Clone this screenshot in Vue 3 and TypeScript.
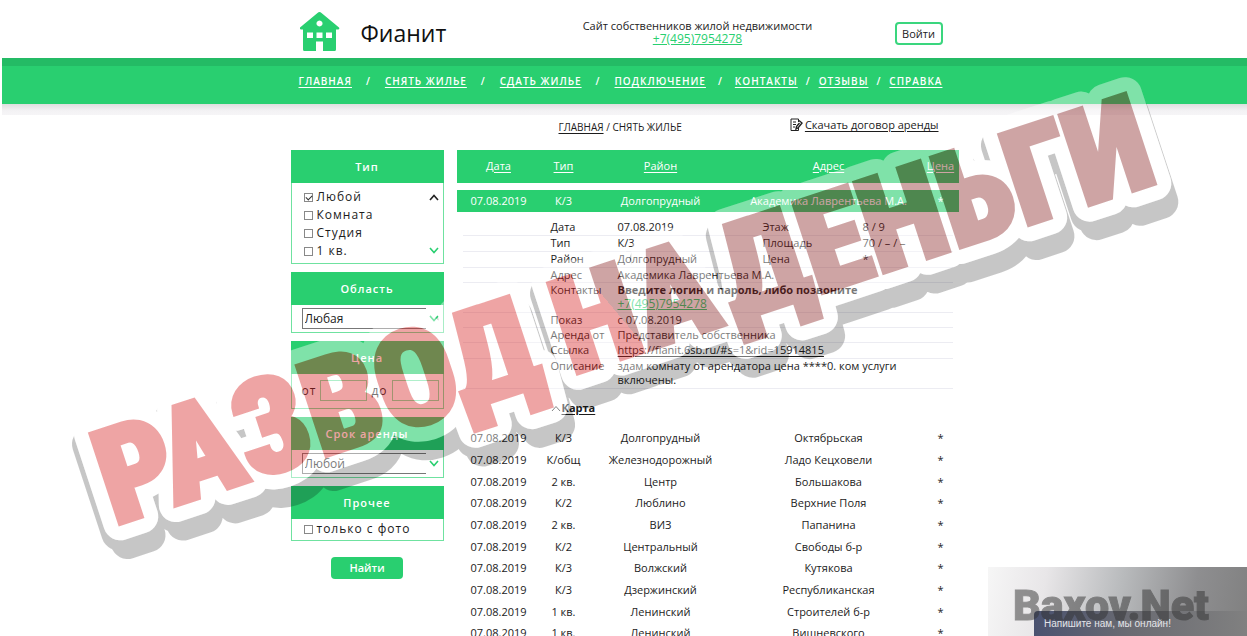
<script setup lang="ts">
import { ref } from 'vue'

interface Listing {
  date: string
  type: string
  district: string
  address: string
}

const nav: { label: string; gap: string }[] = [
  { label: 'ГЛАВНАЯ', gap: '' },
  { label: 'СНЯТЬ ЖИЛЬЕ', gap: 'wide' },
  { label: 'СДАТЬ ЖИЛЬЕ', gap: 'wide' },
  { label: 'ПОДКЛЮЧЕНИЕ', gap: 'wide' },
  { label: 'КОНТАКТЫ', gap: 'medium' },
  { label: 'ОТЗЫВЫ', gap: 'narrow' },
  { label: 'СПРАВКА', gap: 'narrow' },
]

const columns = ['Дата', 'Тип', 'Район', 'Адрес', 'Цена']

const kinds = ref([
  { label: 'Любой', on: true },
  { label: 'Комната', on: false },
  { label: 'Студия', on: false },
  { label: '1 кв.', on: false },
])
const photoOnly = ref(false)

const date = '07.08.2019'
const listings: Listing[] = [
  { date, type: 'К/3', district: 'Долгопрудный', address: 'Октябрьская' },
  { date, type: 'К/общ', district: 'Железнодорожный', address: 'Ладо Кецховели' },
  { date, type: '2 кв.', district: 'Центр', address: 'Большакова' },
  { date, type: 'К/2', district: 'Люблино', address: 'Верхние Поля' },
  { date, type: '2 кв.', district: 'ВИЗ', address: 'Папанина' },
  { date, type: 'К/2', district: 'Центральный', address: 'Свободы б-р' },
  { date, type: 'К/3', district: 'Волжский', address: 'Кутякова' },
  { date, type: 'К/3', district: 'Дзержинский', address: 'Республиканская' },
  { date, type: '1 кв.', district: 'Ленинский', address: 'Строителей б-р' },
  { date, type: '1 кв.', district: 'Ленинский', address: 'Вишневского' },
]

const stampWords = [
  { text: 'РАЗВОД', x: -4 },
  { text: 'НА', x: 478 },
  { text: 'ДЕНЬГИ', x: 650 },
]
</script>

<template>
  <div class="page">
    <header class="wrap head">
      <a class="logo" href="#">
        <svg width="40" height="40" viewBox="0 0 40 40" aria-hidden="true">
          <path
            fill="#29cf70"
            fill-rule="evenodd"
            d="M19.500 0 Q20.500 0 21.500 1 L39 15.500 Q40 17 38 17.500 H36 V37.500 Q36 39 34.500 39 H23 V29.500 H16 V39 H4.500 Q3 39 3 37.500 V17.500 H1 Q-1 17 0 15.500 L17.500 1 Q18.500 0 19.500 0 Z M19.500 8.500 a3 3 0 1 0 .01 0 Z M7 20.500 V26 H13 V20.500 Z M16.500 20.500 V26 H22.500 V20.500 Z M26 20.500 V26 H32 V20.500 Z"
          />
        </svg>
        <span>Фианит</span>
      </a>
      <div class="tagline">
        <span>Сайт собственников жилой недвижимости</span>
        <a class="phone" href="tel:+74957954278">+7(495)7954278</a>
      </div>
      <button class="login" type="button">Войти</button>
    </header>

    <nav class="bar">
      <div class="wrap links">
        <template v-for="item in nav" :key="item.label">
          <span v-if="item.gap" :class="item.gap">/</span>
          <a href="#">{{ item.label }}</a>
        </template>
      </div>
    </nav>
    <div class="shade"></div>

    <div class="wrap crumbs">
      <div class="path"><a href="#">ГЛАВНАЯ</a> / СНЯТЬ ЖИЛЬЕ</div>
      <a class="contract" href="#">
        <svg width="13" height="14" viewBox="0 0 13 14" fill="none" stroke="#222" aria-hidden="true">
          <path d="M8.500 1 H1 V12.500 H8.500 V10 M8.500 1 V4 M3 4 H6 M3 6.500 H6 M3 9 H5" />
          <path d="M9 2.500 L12 5 L8 10 L6 11 L6.500 8.500 L9.500 5" stroke-width="1.400" />
        </svg>
        <span>Скачать договор аренды</span>
      </a>
    </div>

    <div class="wrap content">
      <form class="side" @submit.prevent>
        <section class="panel">
          <h2>Тип</h2>
          <div class="kinds">
            <div class="options">
              <label v-for="kind in kinds" :key="kind.label" class="check">
                <input v-model="kind.on" type="checkbox" />{{ kind.label }}
              </label>
            </div>
            <div class="arrows">
              <svg width="10" height="7" viewBox="0 0 10 7" aria-hidden="true"><path d="M1 6 L5 1.500 L9 6" fill="none" stroke="#222" stroke-width="1.600" /></svg>
              <svg width="10" height="7" viewBox="0 0 10 7" aria-hidden="true"><path d="M1 1 L5 5.500 L9 1" fill="none" stroke="#29cf70" stroke-width="1.600" /></svg>
            </div>
          </div>
        </section>

        <section class="panel">
          <h2 id="area-title">Область</h2>
          <div class="pick">
            <select aria-labelledby="area-title"><option>Любая</option></select>
            <svg width="10" height="7" viewBox="0 0 10 7" aria-hidden="true"><path d="M1 1 L5 5.500 L9 1" fill="none" stroke="#29cf70" stroke-width="1.600" /></svg>
          </div>
        </section>

        <section class="panel">
          <h2>Цена</h2>
          <div class="price">
            <label for="price-from">от</label><input id="price-from" type="text" />
            <label for="price-to">до</label><input id="price-to" type="text" />
          </div>
        </section>

        <section class="panel">
          <h2 id="term-title">Срок аренды</h2>
          <div class="pick">
            <select aria-labelledby="term-title"><option>Любой</option></select>
            <svg width="10" height="7" viewBox="0 0 10 7" aria-hidden="true"><path d="M1 1 L5 5.500 L9 1" fill="none" stroke="#29cf70" stroke-width="1.600" /></svg>
          </div>
        </section>

        <section class="panel">
          <h2>Прочее</h2>
          <div class="other">
            <label class="check"><input v-model="photoOnly" type="checkbox" />только с фото</label>
          </div>
        </section>

        <button class="find" type="submit">Найти</button>
      </form>

      <main>
        <table class="list">
          <colgroup>
            <col class="c-date" /><col class="c-type" /><col class="c-district" /><col class="c-address" /><col />
          </colgroup>
          <thead>
            <tr>
              <th v-for="name in columns" :key="name"><a href="#">{{ name }}</a></th>
            </tr>
          </thead>
          <tbody>
            <tr class="active">
              <td>07.08.2019</td><td>К/3</td><td>Долгопрудный</td><td>Академика Лаврентьева М.А.</td><td>*</td>
            </tr>
            <tr>
              <td colspan="5" class="details">
                <dl>
                  <div><dt>Дата</dt><dd>07.08.2019</dd><dt>Этаж</dt><dd>8 / 9</dd></div>
                  <div><dt>Тип</dt><dd>К/3</dd><dt>Площадь</dt><dd>70 / – / –</dd></div>
                  <div><dt>Район</dt><dd>Долгопрудный</dd><dt>Цена</dt><dd>*</dd></div>
                  <div class="tight"><dt>Адрес</dt><dd class="long">Академика Лаврентьева М.А.</dd></div>
                  <div>
                    <dt>Контакты</dt>
                    <dd class="long">
                      <b>Введите логин и пароль, либо позвоните</b><br />
                      <a class="phone" href="tel:+74957954278">+7(495)7954278</a>
                    </dd>
                  </div>
                  <div class="tight"><dt>Показ</dt><dd class="long">с 07.08.2019</dd></div>
                  <div class="tight"><dt>Аренда от</dt><dd class="long">Представитель собственника</dd></div>
                  <div><dt>Ссылка</dt><dd class="long"><a href="#">https://fianit.6sb.ru/#s=1&amp;rid=15914815</a></dd></div>
                  <div><dt>Описание</dt><dd class="long">здам комнату от арендатора цена ****0. ком услуги включены.</dd></div>
                </dl>
                <div class="map">
                  <svg width="10" height="7" viewBox="0 0 10 7" aria-hidden="true"><path d="M1 6 L5 1.500 L9 6" fill="none" stroke="#333" /></svg>
                  <a href="#">Карта</a>
                </div>
              </td>
            </tr>
          </tbody>
          <tbody class="rows">
            <tr v-for="(row, i) in listings" :key="i">
              <td>{{ row.date }}</td><td>{{ row.type }}</td><td>{{ row.district }}</td><td>{{ row.address }}</td><td>*</td>
            </tr>
          </tbody>
        </table>
      </main>
    </div>

    <svg class="stamp" viewBox="0 0 1247 636" aria-hidden="true">
      <defs>
        <linearGradient id="ink" gradientUnits="userSpaceOnUse" x1="457" y1="-41" x2="603" y2="-99">
          <stop offset="0.500" stop-color="#d71e1e" />
          <stop offset="0.500" stop-color="#871e1e" />
        </linearGradient>
        <mask id="outside" maskUnits="userSpaceOnUse" x="-100" y="-200" width="1400" height="400">
          <rect x="-100" y="-200" width="1400" height="400" fill="#fff" />
          <text class="edge cut"><tspan v-for="w in stampWords" :key="w.text" :x="w.x" y="0">{{ w.text }}</tspan></text>
        </mask>
      </defs>
      <g transform="translate(118 524) rotate(-18.200)">
        <g mask="url(#outside)" opacity="0.220">
          <text class="edge drop" transform="translate(-5 9)"><tspan v-for="w in stampWords" :key="w.text" :x="w.x" y="0">{{ w.text }}</tspan></text>
          <text class="edge drop" transform="translate(1 20)"><tspan v-for="w in stampWords" :key="w.text" :x="w.x" y="0">{{ w.text }}</tspan></text>
        </g>
        <g opacity="0.400">
          <text class="edge"><tspan v-for="w in stampWords" :key="w.text" :x="w.x" y="0">{{ w.text }}</tspan></text>
          <text class="face"><tspan v-for="w in stampWords" :key="w.text" :x="w.x" y="0">{{ w.text }}</tspan></text>
        </g>
      </g>
    </svg>

    <aside class="corner">
      <button class="chat" type="button">Напишите нам, мы онлайн!</button>
      <span class="brand">Baxov.Net</span>
    </aside>
  </div>
</template>

<style>
body {
  margin: 0;
  background: #fff;
}
</style>

<style scoped>
.page {
  position: relative;
  height: 100vh;
  overflow: hidden;
  padding-left: 2px;
  color: #1c1c1c;
  font: 11px/14px 'Open Sans', 'Noto Sans', sans-serif;
}
.page * {
  box-sizing: border-box;
}
a {
  color: inherit;
  text-underline-offset: 2px;
}
button,
input,
select {
  font: inherit;
  color: inherit;
}
.wrap {
  max-width: 668px;
  margin: 0 auto;
}
.head {
  display: grid;
  grid-template-columns: 290px 234px 1fr;
  height: 58px;
  padding-right: 16px;
}
.logo {
  display: flex;
  gap: 21px;
  padding: 12px 0 0 9px;
  color: #111;
  font-size: 23px;
  line-height: 42px;
  text-decoration: none;
}
.tagline {
  display: flex;
  flex-direction: column;
  align-items: center;
  padding-top: 19px;
  line-height: 13px;
  white-space: nowrap;
}
.phone {
  color: #29cf70;
  font-size: 12px;
  text-underline-offset: 1px;
}
.login {
  justify-self: end;
  width: 48px;
  height: 23px;
  margin-top: 22px;
  padding: 0;
  border: 2px solid #3ad67e;
  border-radius: 4px;
  background: #fff;
}
.bar {
  height: 46px;
  border-top: 8px solid #24bb65;
  background: #29cf70;
  color: #fff;
}
.links {
  display: flex;
  padding: 8px 0 0 8px;
  font-size: 10px;
  font-weight: 600;
  letter-spacing: 1px;
  white-space: nowrap;
}
.wide {
  padding: 0 14px;
}
.medium {
  padding: 0 12px;
}
.narrow {
  padding: 0 8px;
}
.shade {
  height: 11px;
  background: linear-gradient(#dedede, #f3f2f4 60%, #f6f5f7);
}
.crumbs {
  display: flex;
  justify-content: space-between;
  height: 35px;
  padding: 3px 20px 0 268px;
}
.path {
  padding-top: 2px;
  font-size: 10px;
}
.contract {
  display: flex;
  gap: 2px;
  height: 16px;
}
.content {
  display: grid;
  grid-template-columns: 153px 1fr;
  gap: 13px;
  align-items: start;
}
.side {
  display: flex;
  flex-direction: column;
  gap: 8px;
  font-size: 12px;
  letter-spacing: 1px;
}
.panel {
  border: 1px solid #6fe2a0;
  border-top: 0;
}
.panel h2 {
  margin: 0 -1px;
  background: #29cf70;
  color: #fff;
  font-size: 11px;
  font-weight: 600;
  line-height: 33px;
  text-align: center;
}
.kinds {
  display: flex;
  justify-content: space-between;
  padding: 5px 4px 3px 12px;
}
.options {
  display: flex;
  flex-direction: column;
}
.check {
  display: flex;
  align-items: center;
  gap: 4px;
  line-height: 18px;
}
.check input {
  appearance: none;
  width: 9px;
  height: 9px;
  margin: 0;
  border: 1px solid #888;
  background: #fff;
}
.check input:checked::before {
  content: '';
  display: block;
  width: 5px;
  height: 3px;
  margin: 1px;
  border: solid #333;
  border-width: 0 0 1px 1px;
  transform: rotate(-45deg);
}
.arrows {
  display: flex;
  flex-direction: column;
  justify-content: space-between;
  padding: 6px 0;
}
.pick {
  display: flex;
  align-items: center;
  justify-content: space-between;
  padding: 3px 4px 3px 10px;
}
.pick select {
  appearance: none;
  width: 124px;
  height: 21px;
  padding: 0 2px;
  border: 1px solid #777;
  border-right: 0;
  border-radius: 0;
  background: #fff;
  letter-spacing: 0;
}
.price {
  display: flex;
  align-items: center;
  justify-content: space-between;
  padding: 6px 4px 7px 10px;
}
.price input {
  width: 47px;
  height: 21px;
  border: 1px solid #7be5a8;
  background: #fff;
}
.other {
  padding: 1px 0 2px 12px;
}
.find {
  align-self: center;
  width: 72px;
  height: 22px;
  margin-top: 8px;
  padding: 0;
  border: 0;
  border-radius: 4px;
  background: #29cf70;
  color: #fff;
  font-size: 11px;
  font-weight: 600;
}
.list {
  width: 100%;
  table-layout: fixed;
  border-spacing: 0;
  text-align: center;
}
.c-date {
  width: 84px;
}
.c-type {
  width: 46px;
}
.c-district {
  width: 148px;
}
.c-address {
  width: 188px;
}
.list th {
  height: 33px;
  padding: 0 0 2px;
  background: #29cf70;
  color: #fff;
  font-weight: 400;
}
.list td {
  padding: 0;
  white-space: nowrap;
}
.active td {
  height: 29px;
  border-top: 7px solid #fff;
  background: #29cf70;
  color: #fff;
}
.list .details {
  padding: 8px 6px 12px;
  text-align: left;
}
dl {
  margin: 0;
}
dl div {
  display: grid;
  grid-template-columns: 67px 145px 100px 1fr;
  padding: 0 0 1px 88px;
  border-bottom: 1px solid #ececf2;
}
dl .tight {
  padding-bottom: 0;
}
dd {
  margin: 0;
}
.details .long {
  grid-column: 2 / 5;
  padding-right: 50px;
  white-space: normal;
}
.map {
  display: flex;
  align-items: center;
  gap: 1px;
  padding: 12px 0 0 88px;
  font-weight: 700;
}
.rows tr {
  height: 22px;
}
.rows tr:nth-child(3n) {
  height: 21px;
}
.stamp {
  position: absolute;
  top: 0;
  left: 0;
  width: 100%;
  pointer-events: none;
}
.stamp text {
  font-family: Impact, 'Liberation Sans Narrow', 'Roboto Condensed', 'Open Sans Condensed', Roboto, sans-serif;
  font-size: 132px;
  font-weight: 900;
}
.face {
  fill: url(#ink);
  stroke: url(#ink);
  stroke-width: 5px;
}
.edge {
  fill: #fff;
  stroke: #fff;
  stroke-width: 34px;
  stroke-linejoin: round;
}
.cut,
.drop {
  fill: #000;
  stroke: #000;
}
.corner {
  position: absolute;
  right: 0;
  bottom: 0;
  display: flex;
  align-items: flex-end;
  justify-content: flex-end;
  width: 259px;
  height: 69px;
  background: linear-gradient(100deg, #f6f6f6, #e8e6e8 22%, #b9bbbd 50%, #8e8e90 78%, #808080);
}
.chat {
  width: 213px;
  height: 25px;
  padding: 0 10px;
  border: 0;
  border-radius: 4px 0 0 0;
  background: linear-gradient(90deg, #4a5270, #6a6b72 45%, #808080);
  color: #e4e4e8;
  font: 10px/12px 'Liberation Sans', sans-serif;
  text-align: left;
}
.brand {
  position: absolute;
  top: 13px;
  left: 25px;
  color: #333;
  opacity: 0.500;
  font: 900 43px/50px Impact, 'Liberation Sans Narrow', Roboto, sans-serif;
  -webkit-text-stroke: 1px #333;
}
</style>
